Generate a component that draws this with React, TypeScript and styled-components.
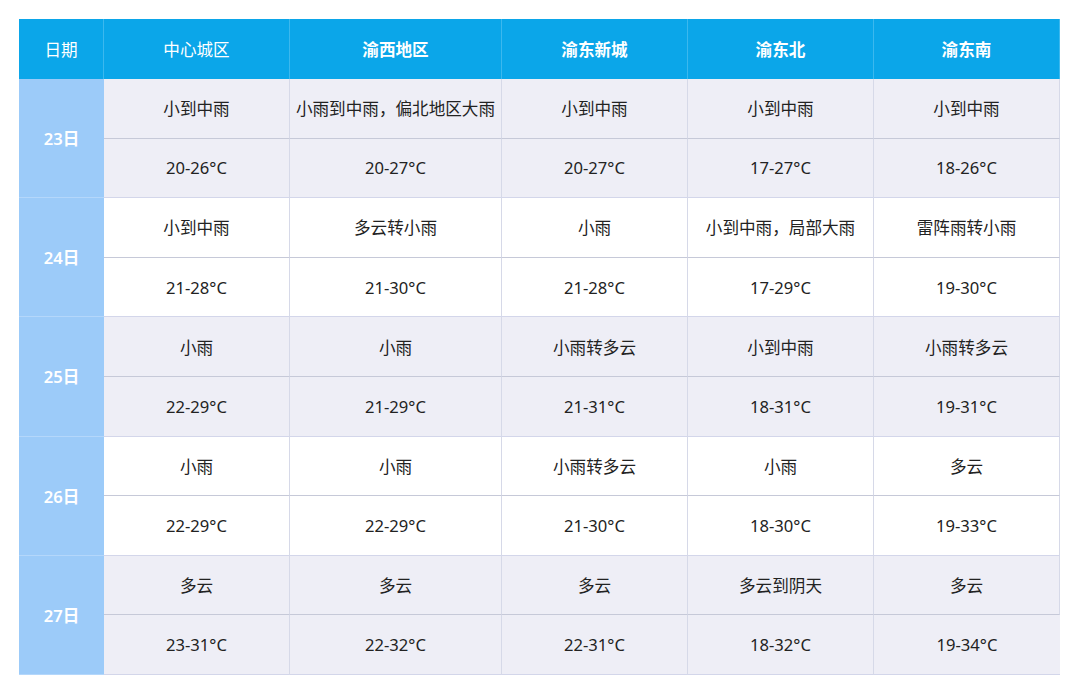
import React from "react";
import styled, { createGlobalStyle } from "styled-components";

const GlobalStyle = createGlobalStyle`
  body {
    margin: 0;
    background: #ffffff;
    font-family: "Noto Sans", "Noto Sans CJK SC", sans-serif;
  }
`;

const Page = styled.div`
  padding: 19px 20px 20px 19px;
  width: 1080px;
  box-sizing: border-box;
`;

const Grid = styled.div`
  display: grid;
  grid-template-columns: 85px 186px 212px 186px 186px 186px;
  grid-template-rows: 60px repeat(10, 59.6px);
  width: 1041px;
`;

const HeadCell = styled.div<{ $bold?: boolean }>`
  background: #0ba6e9;
  color: #ffffff;
  font-family: "Noto Sans CJK SC", sans-serif;
  font-size: 16.6px;
  font-weight: ${(p) => (p.$bold ? 600 : 400)};
  display: flex;
  align-items: center;
  justify-content: center;
  border-right: 1px solid #3cb8ee;
  &:last-child {
    border-right: none;
  }
`;

const DateCell = styled.div`
  grid-row: span 2;
  background: #9ccbf9;
  color: #ffffff;
  font-size: 16.6px;
  font-weight: 600;
  display: flex;
  align-items: center;
  justify-content: center;
  border-bottom: 1px solid #b4d7fb;
`;

const Cell = styled.div<{ $shade: boolean; $top: boolean }>`
  background: ${(p) => (p.$shade ? "#eeeef6" : "#ffffff")};
  color: #222222;
  font-size: 16.6px;
  display: flex;
  align-items: center;
  justify-content: center;
  border-right: 1px solid #d6d9e8;
  border-bottom: 1px solid ${(p) => (p.$top ? "#c6c9d8" : "#d3d6ea")};
  white-space: nowrap;
  box-sizing: border-box;
  &:last-child {
    border-right: none;
  }
`;

const heads = [
  { t: "日期", b: false },
  { t: "中心城区", b: false },
  { t: "渝西地区", b: true },
  { t: "渝东新城", b: true },
  { t: "渝东北", b: true },
  { t: "渝东南", b: true },
];

const days = [
  {
    d: "23日",
    w: ["小到中雨", "小雨到中雨，偏北地区大雨", "小到中雨", "小到中雨", "小到中雨"],
    t: ["20-26°C", "20-27°C", "20-27°C", "17-27°C", "18-26°C"],
  },
  {
    d: "24日",
    w: ["小到中雨", "多云转小雨", "小雨", "小到中雨，局部大雨", "雷阵雨转小雨"],
    t: ["21-28°C", "21-30°C", "21-28°C", "17-29°C", "19-30°C"],
  },
  {
    d: "25日",
    w: ["小雨", "小雨", "小雨转多云", "小到中雨", "小雨转多云"],
    t: ["22-29°C", "21-29°C", "21-31°C", "18-31°C", "19-31°C"],
  },
  {
    d: "26日",
    w: ["小雨", "小雨", "小雨转多云", "小雨", "多云"],
    t: ["22-29°C", "22-29°C", "21-30°C", "18-30°C", "19-33°C"],
  },
  {
    d: "27日",
    w: ["多云", "多云", "多云", "多云到阴天", "多云"],
    t: ["23-31°C", "22-32°C", "22-31°C", "18-32°C", "19-34°C"],
  },
];

const App = () => {
  return (
    <Page>
      <GlobalStyle />
      <Grid>
        {heads.map((h) => (
          <HeadCell key={h.t} $bold={h.b}>
            {h.t}
          </HeadCell>
        ))}
        {days.map((day, i) => {
          const shade = i % 2 === 0;
          return (
            <React.Fragment key={day.d}>
              <DateCell>{day.d}</DateCell>
              {day.w.map((w, j) => (
                <Cell key={"w" + j} $shade={shade} $top={true}>
                  {w}
                </Cell>
              ))}
              {day.t.map((t, j) => (
                <Cell key={"t" + j} $shade={shade} $top={false}>
                  {t}
                </Cell>
              ))}
            </React.Fragment>
          );
        })}
      </Grid>
    </Page>
  );
};

export default App;
